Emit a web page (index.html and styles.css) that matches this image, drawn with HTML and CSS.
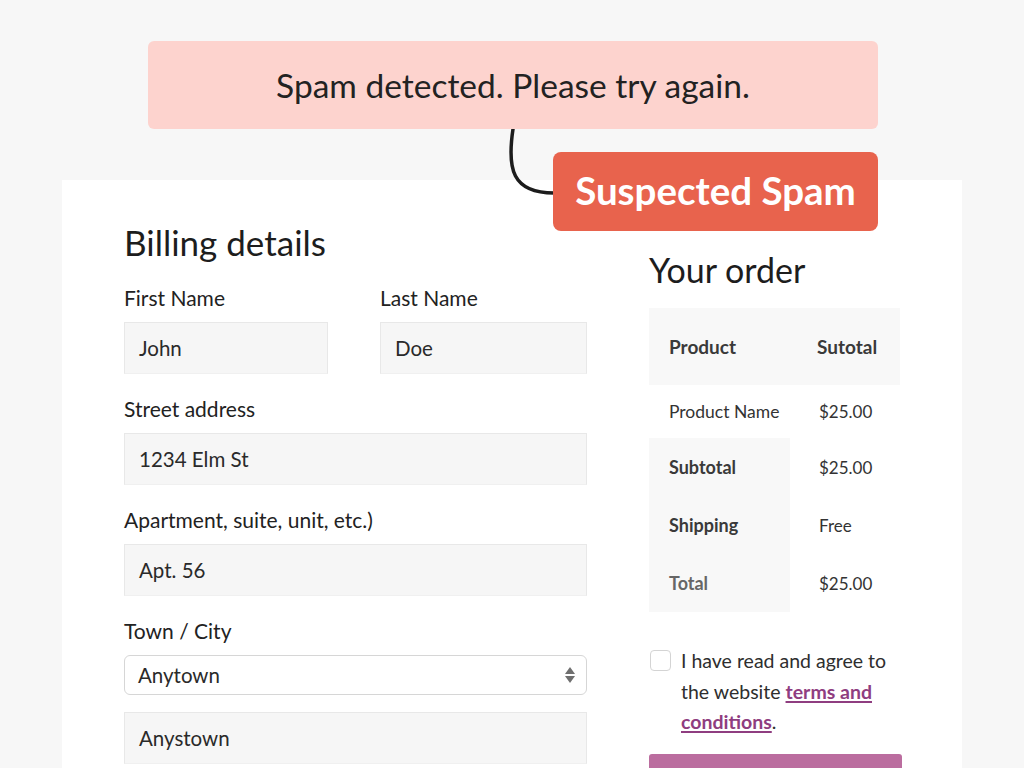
FILE: index.html
```html
<!DOCTYPE html>
<html>
<head>
<meta charset="utf-8">
<link rel="stylesheet" href="styles.css">
</head>
<body>
<div class="alert">Spam detected. Please try again.</div>

<svg class="connector" width="60" height="80" viewBox="0 0 60 80">
  <path d="M9 0 C 3 40, 8 64, 50 64" fill="none" stroke="#1c1c1c" stroke-width="3.5" stroke-linecap="round"/>
</svg>
<div class="badge">Suspected Spam</div>

<main class="card">
  <section class="billing">
    <h2 class="title title-billing">Billing details</h2>
    <div class="row2">
      <div class="field">
        <label class="label">First Name</label>
        <div class="input">John</div>
      </div>
      <div class="field">
        <label class="label">Last Name</label>
        <div class="input">Doe</div>
      </div>
    </div>
    <div class="field">
      <label class="label">Street address</label>
      <div class="input">1234 Elm St</div>
    </div>
    <div class="field">
      <label class="label">Apartment, suite, unit, etc.)</label>
      <div class="input">Apt. 56</div>
    </div>
    <div class="field">
      <label class="label">Town / City</label>
      <div class="select">
        <span>Anytown</span>
        <svg class="arrows" width="12" height="18" viewBox="0 0 12 18">
          <path d="M6 1 L11 8 L1 8 Z" fill="#6f6f6f"/>
          <path d="M6 17 L11 10 L1 10 Z" fill="#6f6f6f"/>
        </svg>
      </div>
    </div>
    <div class="input input-last">Anystown</div>
  </section>

  <section class="order">
    <h2 class="title">Your order</h2>
    <div class="table">
      <div class="thead">
        <div class="c1 th">Product</div>
        <div class="c2 th">Sutotal</div>
      </div>
      <div class="tr prod">
        <div class="c1 td">Product Name</div>
        <div class="c2 td">$25.00</div>
      </div>
      <div class="tr">
        <div class="c1 tl">Subtotal</div>
        <div class="c2 td">$25.00</div>
      </div>
      <div class="tr">
        <div class="c1 tl">Shipping</div>
        <div class="c2 td">Free</div>
      </div>
      <div class="tr">
        <div class="c1 tl muted">Total</div>
        <div class="c2 td">$25.00</div>
      </div>
    </div>
    <div class="agree">
      <span class="check"></span>
      <p class="agree-text"><span class="nw">I have read and agree to</span> <span class="nw">the website</span> <a href="#">terms and</a> <a href="#">conditions</a><span>.</span></p>
    </div>
    <div class="button"></div>
  </section>
</main>
</body>
</html>
```

FILE: styles.css
```css
* { box-sizing: border-box; }
html, body {
  margin: 0;
  padding: 0;
}
body {
  position: relative;
  width: 1024px;
  height: 768px;
  overflow: hidden;
  background: #f7f7f7;
  font-family: "Lato", "Open Sans", sans-serif;
  color: #222;
}
.alert {
  margin: 41px 0 0 148px;
  width: 730px;
  height: 88px;
  background: #fdd3ce;
  border-radius: 6px;
  display: flex;
  align-items: center;
  justify-content: center;
  font-size: 33.5px;
  color: #222;
}
.connector {
  position: absolute;
  left: 504px;
  top: 129px;
}
.badge {
  position: absolute;
  left: 553px;
  top: 152px;
  width: 325px;
  height: 79px;
  background: #e8634d;
  border-radius: 8px;
  color: #fff;
  font-weight: 700;
  font-size: 38.5px;
  display: flex;
  align-items: center;
  justify-content: center;
  z-index: 2;
  padding-bottom: 3px;
}
.card {
  margin: 51px 0 0 62px;
  width: 900px;
  height: 600px;
  background: #fff;
  padding: 0 60px 0 62px;
  display: grid;
  grid-template-columns: 463px 253px;
  column-gap: 62px;
}
.title {
  margin: 0;
  font-weight: 400;
  font-size: 34px;
  line-height: 44px;
  color: #1d1d1d;
}
.title-billing { font-size: 35px; }
.billing { padding-top: 40px; }
.billing .title { margin-bottom: 22px; }
.row2 {
  display: grid;
  grid-template-columns: 204px 207px;
  column-gap: 52px;
}
.field { margin-bottom: 23px; }
.label {
  display: block;
  font-size: 21px;
  line-height: 24px;
  margin-bottom: 12px;
  color: #222;
}
.input {
  height: 52px;
  background: #f6f6f6;
  border: 1px solid #e8e8e8;
  border-bottom-color: #f0f0f0;
  padding-left: 14px;
  display: flex;
  align-items: center;
  font-size: 20.5px;
  color: #2a2a2a;
}
.select {
  height: 40px;
  background: #fff;
  border: 1px solid #d6d6d6;
  border-radius: 6px;
  padding: 0 10px 0 13px;
  display: flex;
  align-items: center;
  justify-content: space-between;
  font-size: 20.5px;
  color: #2a2a2a;
}
.input-last { margin-top: -6px; }

.order { padding-top: 68px; }
.order .title { margin-bottom: 16px; }
.table { width: 251px; }
.thead {
  display: flex;
  height: 77px;
  background: #f8f8f8;
  align-items: center;
}
.tr {
  display: flex;
  height: 58px;
  align-items: center;
}
.tr.prod { height: 53px; }
.c1 {
  width: 141px;
  padding-left: 20px;
  height: 100%;
  display: flex;
  align-items: center;
}
.c2 {
  padding-left: 28px;
  height: 100%;
  display: flex;
  align-items: center;
}
.thead .c2 { padding-left: 27px; }
.th {
  font-size: 19px;
  font-weight: 700;
  color: #3a3a3a;
}
.td {
  font-size: 17px;
  color: #333;
}
.prod .c1 { font-size: 17.5px; }
.tl {
  background: #f8f8f8;
  font-size: 18px;
  font-weight: 700;
  color: #3a3a3a;
}
.tl.muted { color: #666; font-weight: 700; }
.tr .c2 { padding-left: 29px; }

.agree {
  display: flex;
  margin-top: 38px;
  align-items: flex-start;
}
.check {
  flex: none;
  width: 21px;
  height: 21px;
  border: 1.5px solid #d4d4d4;
  border-radius: 4px;
  margin: 0 10px 0 1px;
  background: #fff;
}
.agree-text {
  margin: -4px 0 0 0;
  font-size: 19.5px;
  line-height: 30.5px;
  color: #2e2e2e;
}
.nw { white-space: nowrap; }
.agree-text a {
  color: #8f3d80;
  font-weight: 700;
  white-space: nowrap;
  text-decoration: underline;
  text-decoration-thickness: 2px;
  text-underline-offset: 2px;
}
.button {
  margin-top: 16px;
  width: 253px;
  height: 40px;
  background: #bb6d9f;
  border-radius: 3px;
}
```
